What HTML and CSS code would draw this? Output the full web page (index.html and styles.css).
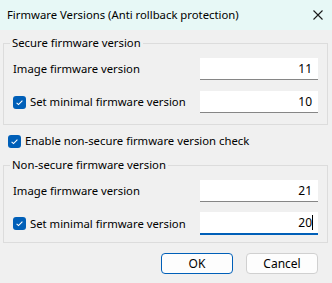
FILE: index.html
```html
<!DOCTYPE html>
<html>
<head>
<meta charset="utf-8">
<link rel="stylesheet" href="styles.css">
</head>
<body>
<div class="window">
  <div class="titlebar">
    <span class="title">Firmware Versions (Anti rollback protection)</span>
    <svg class="close" width="10" height="10" viewBox="0 0 10 10"><path d="M0.5 0.5 L9.5 9.5 M9.5 0.5 L0.5 9.5" stroke="#1a1a1a" stroke-width="1.1" fill="none"/></svg>
  </div>
  <div class="content">
    <fieldset class="group g1">
      <legend>Secure firmware version</legend>
      <div class="row">
        <span class="label">Image firmware version</span>
        <div class="textbox">11</div>
      </div>
      <div class="row">
        <span class="check-label"><span class="checkbox"><svg width="13" height="13" viewBox="0 0 13 13"><path d="M3.6 6.8 L5.5 8.6 L9.4 4.6" stroke="#fff" stroke-width="1.1" fill="none"/></svg></span>Set minimal firmware version</span>
        <div class="textbox">10</div>
      </div>
    </fieldset>
    <div class="enable-row">
      <span class="check-label"><span class="checkbox"><svg width="13" height="13" viewBox="0 0 13 13"><path d="M3.6 6.8 L5.5 8.6 L9.4 4.6" stroke="#fff" stroke-width="1.1" fill="none"/></svg></span>Enable non-secure firmware version check</span>
    </div>
    <fieldset class="group g2">
      <legend>Non-secure firmware version</legend>
      <div class="row">
        <span class="label">Image firmware version</span>
        <div class="textbox">21</div>
      </div>
      <div class="row">
        <span class="check-label"><span class="checkbox"><svg width="13" height="13" viewBox="0 0 13 13"><path d="M3.6 6.8 L5.5 8.6 L9.4 4.6" stroke="#fff" stroke-width="1.1" fill="none"/></svg></span>Set minimal firmware version</span>
        <div class="textbox focused">20<span class="caret"></span></div>
      </div>
    </fieldset>
    <div class="buttons">
      <div class="button default">OK</div>
      <div class="button">Cancel</div>
    </div>
  </div>
</div>
</body>
</html>
```
FILE: styles.css
```css
html, body {
  margin: 0;
  padding: 0;
}
body {
  width: 332px;
  height: 283px;
  background: #f0f0f0;
  font-family: "Noto Sans", "Open Sans", sans-serif;
  font-size: 11.3px;
  color: #000;
  overflow: hidden;
}
.window {
  display: flex;
  flex-direction: column;
  height: 283px;
}
.titlebar {
  height: 30px;
  background: #e7f8f6;
  display: flex;
  align-items: center;
  justify-content: space-between;
  padding: 0 9px 0 7px;
  flex: none;
}
.title {
  line-height: 16px;
}
.close {
  display: block;
}
.content {
  display: flex;
  flex-direction: column;
  padding: 5px 4px 0 3px;
}
.group {
  margin: 0;
  border: 1px solid #dcdcdc;
  padding: 7px 9px 11px 9px;
  display: flex;
  flex-direction: column;
  gap: 11px;
  min-width: 0;
}
.g2 {
  gap: 10px;
  padding-bottom: 7px;
}
.group legend {
  padding: 0 2px;
  margin-left: -3px;
  line-height: 16px;
  height: 16px;
}
.row {
  display: flex;
  align-items: center;
  justify-content: space-between;
}
.label {
  line-height: 16px;
}
.check-label {
  display: flex;
  align-items: center;
  gap: 4px;
  line-height: 16px;
}
.checkbox {
  width: 13px;
  height: 13px;
  border-radius: 3px;
  background: #005fb8;
  display: block;
  flex: none;
}
.checkbox svg {
  display: block;
}
.textbox {
  width: 118px;
  box-sizing: border-box;
  height: 22px;
  background: #fff;
  border-bottom: 1px solid #868686;
  display: flex;
  align-items: center;
  justify-content: flex-end;
  padding-right: 6px;
  line-height: 16px;
  font-size: 12px;
}
.textbox.focused {
  height: 23px;
  border-bottom: 2px solid #005fb8;
  padding-right: 5px;
}
.caret {
  width: 1px;
  height: 15px;
  background: #000;
}
.enable-row {
  display: flex;
  padding: 8px 0 8px 5px;
}
.buttons {
  display: flex;
  justify-content: flex-end;
  gap: 13px;
  padding: 10px 10px 0 0;
}
.button {
  width: 72px;
  height: 21px;
  box-sizing: border-box;
  border: 1px solid #d0d0d0;
  border-radius: 4px;
  background: #fdfdfd;
  display: flex;
  align-items: center;
  justify-content: center;
  line-height: 16px;
  font-size: 12px;
}
.button.default {
  border-color: #005fb8;
}
```
